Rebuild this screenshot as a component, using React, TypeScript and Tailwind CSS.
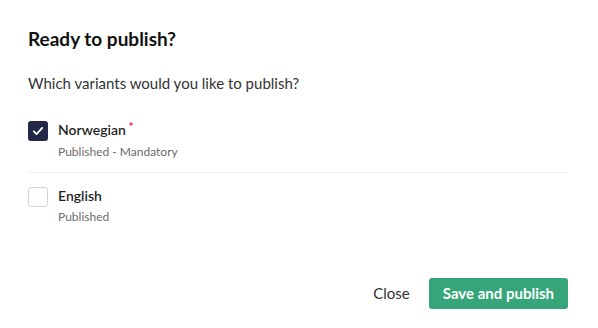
import React from "react";

function CheckMark() {
  return (
    <svg viewBox="0 0 20 20" className="h-[14px] w-[14px]" fill="none">
      <path d="M4 10.5l4 4 8-9" stroke="white" strokeWidth="2.6" strokeLinecap="round" strokeLinejoin="round" />
    </svg>
  );
}

function Variant({ name, note, checked, required }: { name: string; note: string; checked?: boolean; required?: boolean }) {
  return (
    <div className="flex items-start gap-[10px]">
      <div
        className={
          checked
            ? "mt-[1px] flex h-[20px] w-[20px] items-center justify-center rounded-[3px] bg-[#232849]"
            : "mt-[1px] h-[20px] w-[20px] rounded-[3px] border border-[#d4d4d4] bg-white"
        }
      >
        {checked && <CheckMark />}
      </div>
      <div className="flex flex-col">
        <div className="text-[14px] font-semibold leading-[20px] text-[#1f1f1f]">
          {name}
          {required && <span className="relative top-[-4px] ml-[3px] text-[11px] font-bold text-[#d4184f]">*</span>}
        </div>
        <div className="mt-[3px] text-[12px] leading-[16px] text-[#6b6b6b]">{note}</div>
      </div>
    </div>
  );
}

export default function App() {
  return (
    <main className="h-[328px] w-[598px] bg-white" style={{ fontFamily: "Lato, 'Liberation Sans', sans-serif" }}>
      <div className="flex h-full flex-col pl-[28px] pr-[30px] pt-[26px]">
        <h2 className="text-[19px] font-bold leading-[26px] text-[#111]">Ready to publish?</h2>
        <p className="mt-[21px] text-[15px] leading-[20px] text-[#333]">Which variants would you like to publish?</p>

        <div className="mt-[27px]">
          <Variant name="Norwegian" note="Published - Mandatory" checked required />
        </div>
        <div className="mt-[12px] h-px bg-[#eeeeee]" />
        <div className="mt-[13px]">
          <Variant name="English" note="Published" />
        </div>

        <div className="mt-auto mb-[19px] flex items-center justify-end gap-[17px]">
          <button className="px-[2px] text-[15px] text-[#333]">Close</button>
          <button className="h-[31px] rounded-[3px] bg-[#36a57a] px-[14px] text-[15px] font-bold text-white">
            Save and publish
          </button>
        </div>
      </div>
    </main>
  );
}
